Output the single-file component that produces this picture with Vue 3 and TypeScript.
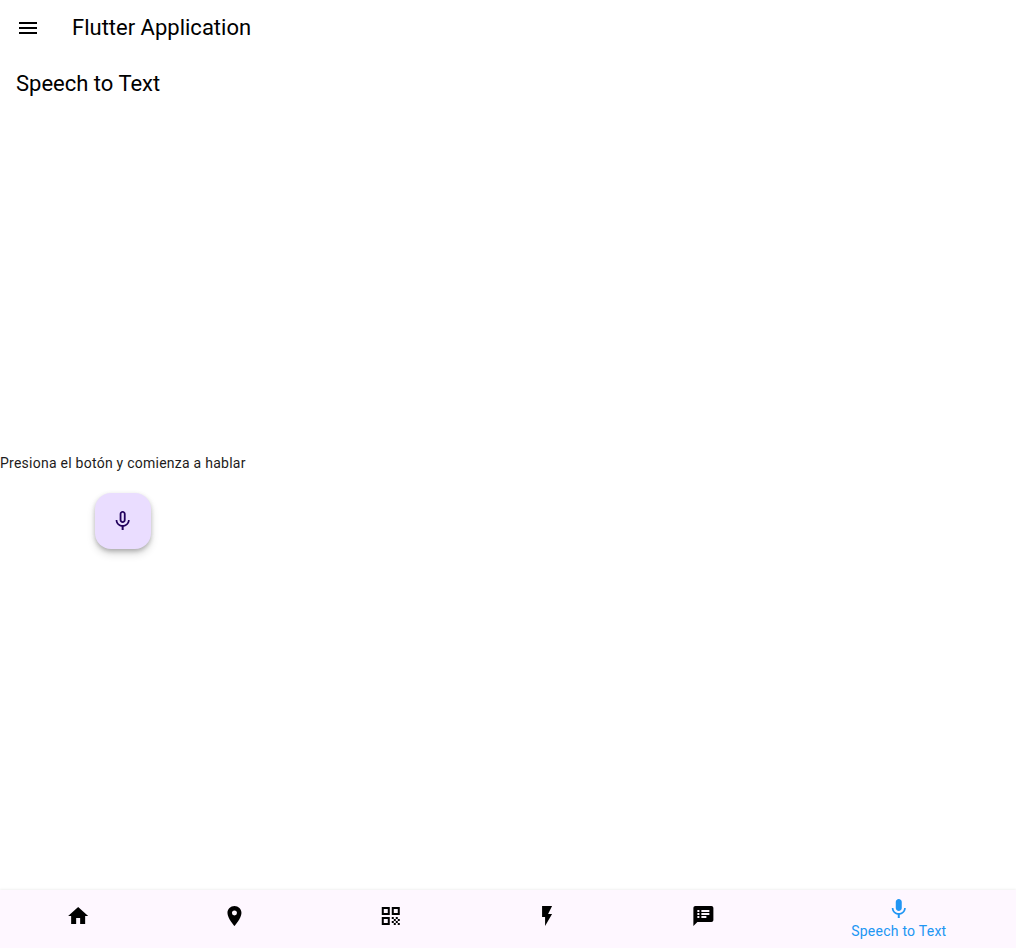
<script setup lang="ts">
interface NavItem {
  id: string
  label: string
  path: string
  shift: number
}

const items: NavItem[] = [
  { id: 'home', label: 'Home', shift: 0.15, path: 'M10 20v-6h4v6h5v-8h3L12 3 2 12h3v8z' },
  {
    id: 'map',
    label: 'Map',
    shift: 0.46,
    path: 'M12 2C8.13 2 5 5.13 5 9c0 5.25 7 13 7 13s7-7.75 7-13c0-3.87-3.13-7-7-7zm0 9.5a2.5 2.5 0 0 1 0-5 2.5 2.5 0 0 1 0 5z',
  },
  {
    id: 'qr',
    label: 'QR',
    shift: -0.23,
    path: 'M3 11h8V3H3v8zm2-6h4v4H5V5zM3 21h8v-8H3v8zm2-6h4v4H5v-4zM13 3v8h8V3h-8zm6 6h-4V5h4v4zM19 19h2v2h-2zM13 13h2v2h-2zM15 15h2v2h-2zM13 17h2v2h-2zM15 19h2v2h-2zM17 17h2v2h-2zM17 13h2v2h-2zM19 15h2v2h-2z',
  },
  { id: 'flash', label: 'Flash', shift: 0.08, path: 'M7 2v11h3v9l7-12h-4l4-8z' },
  {
    id: 'chat',
    label: 'Chat',
    shift: 0.38,
    path: 'M20 2H4c-1.1 0-1.99.9-1.99 2L2 22l4-4h14c1.1 0 2-.9 2-2V4c0-1.1-.9-2-2-2zM8 14H6v-2h2v2zm0-3H6V9h2v2zm0-3H6V6h2v2zm7 6h-5v-2h5v2zm3-3h-8V9h8v2zm0-3h-8V6h8v2z',
  },
  {
    id: 'speech',
    label: 'Speech to Text',
    shift: -0.23,
    path: 'M12 14c1.66 0 2.99-1.34 2.99-3L15 5c0-1.66-1.34-3-3-3S9 3.34 9 5v6c0 1.66 1.34 3 3 3zm5.3-3c0 3-2.54 5.1-5.3 5.1S6.7 14 6.7 11H5c0 3.41 2.72 6.23 6 6.72V21h2v-3.28c3.28-.48 6-3.3 6-6.72h-1.7z',
  },
]
const selected = 'speech'
</script>

<template>
  <div class="app">
    <header class="app-bar">
      <button class="menu" aria-label="Menu">
        <svg viewBox="0 0 24 24"><path d="M3 18h18v-2H3v2zm0-5h18v-2H3v2zm0-7v2h18V6H3z" /></svg>
      </button>
      <h1 class="title">Flutter Application</h1>
    </header>
    <h2 class="title page-title">Speech to Text</h2>
    <main class="body">
      <div class="column">
        <p class="hint">Presiona el botón y comienza a hablar</p>
        <button class="fab" aria-label="Mic">
          <svg viewBox="0.35 0 24 24">
            <path
              d="M12 14c1.66 0 2.99-1.34 2.99-3L15 5c0-1.66-1.34-3-3-3S9 3.34 9 5v6c0 1.66 1.34 3 3 3zm-1.2-9.1c0-.66.54-1.2 1.2-1.2.66 0 1.2.54 1.2 1.2l-.01 6.2c0 .66-.53 1.2-1.19 1.2-.66 0-1.2-.54-1.2-1.2V4.9zm6.5 6.1c0 3-2.54 5.1-5.3 5.1S6.7 14 6.7 11H5c0 3.41 2.72 6.23 6 6.72V21h2v-3.28c3.28-.48 6-3.3 6-6.72h-1.7z"
            />
          </svg>
        </button>
      </div>
    </main>
    <nav class="bottom-nav">
      <button
        v-for="item in items"
        :key="item.id"
        class="nav-item"
        :class="{ active: item.id === selected }"
        :aria-label="item.label"
      >
        <svg :viewBox="`${-item.shift} 0 24 24`"><path fill-rule="evenodd" :d="item.path" /></svg>
        <span v-if="item.id === selected" class="nav-label">{{ item.label }}</span>
      </button>
    </nav>
  </div>
</template>

<style>
body {
  margin: 0;
}
</style>

<style scoped>
.app {
  display: flex;
  flex-direction: column;
  height: 948px;
  overflow: hidden;
  background: #fff;
  color: #000;
  font-family: Roboto, sans-serif;
}
button {
  border: 0;
  padding: 0;
  background: none;
  color: inherit;
  font: inherit;
}
svg {
  display: block;
  width: 24px;
  height: 24px;
  fill: currentColor;
}
.app-bar {
  display: flex;
  align-items: center;
  height: 56px;
}
.menu {
  display: flex;
  justify-content: center;
  width: 56px;
  margin-right: 16px;
}
.title {
  margin: 0;
  font-size: 22px;
  font-weight: 400;
  line-height: 28px;
}
.page-title {
  padding: 14px 16px;
}
.body {
  flex: 1;
  display: flex;
  align-items: center;
}
.column {
  display: flex;
  flex-direction: column;
  align-items: center;
}
.hint {
  margin: 0 0 20px;
  font-size: 14px;
  line-height: 20px;
  letter-spacing: 0.25px;
  color: #1d1b20;
  white-space: nowrap;
}
.fab {
  display: flex;
  align-items: center;
  justify-content: center;
  width: 56px;
  height: 56px;
  border-radius: 16px;
  background: #eaddff;
  color: #21005d;
  box-shadow:
    0 3px 5px -1px rgba(0, 0, 0, 0.2),
    0 5px 8px rgba(0, 0, 0, 0.14),
    0 1px 5px rgba(0, 0, 0, 0.08);
}
.bottom-nav {
  display: flex;
  height: 58px;
  background: #fef7ff;
  box-shadow: 0 -1px 2px rgba(0, 0, 0, 0.06);
}
.nav-item {
  flex: 1 1 0;
  display: flex;
  flex-direction: column;
  align-items: center;
  padding-top: 14px;
}
.nav-item.active {
  flex-grow: 1.5;
  padding-top: 7px;
  color: #2196f3;
}
.nav-label {
  font-size: 14px;
  line-height: 20px;
  letter-spacing: 0.25px;
  white-space: nowrap;
}
</style>
